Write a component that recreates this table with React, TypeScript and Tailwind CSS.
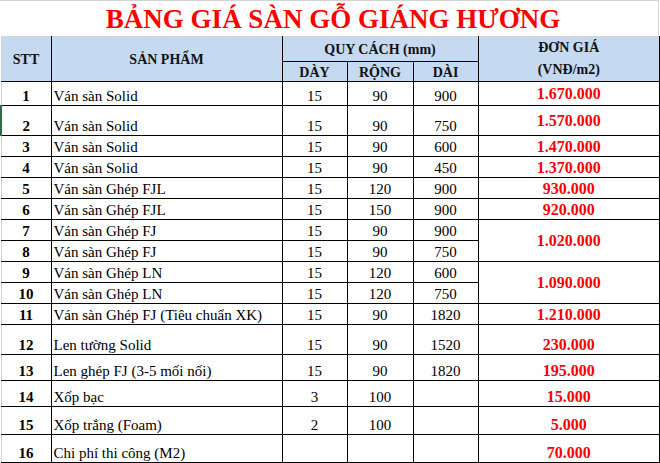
type Row = {
  stt: number;
  name: string;
  day: string;
  rong: string;
  dai: string;
  h: string;
  price?: string;
  span?: number;
  priceAlign?: string;
};

const rows: Row[] = [
  { stt: 1, name: 'Ván sàn Solid', day: '15', rong: '90', dai: '900', h: 'h-[24px]', price: '1.670.000', priceAlign: 'align-middle' },
  { stt: 2, name: 'Ván sàn Solid', day: '15', rong: '90', dai: '750', h: 'h-[30px]', price: '1.570.000', priceAlign: 'align-middle' },
  { stt: 3, name: 'Ván sàn Solid', day: '15', rong: '90', dai: '600', h: 'h-[21px]', price: '1.470.000' },
  { stt: 4, name: 'Ván sàn Solid', day: '15', rong: '90', dai: '450', h: 'h-[21px]', price: '1.370.000' },
  { stt: 5, name: 'Ván sàn Ghép FJL', day: '15', rong: '120', dai: '900', h: 'h-[21px]', price: '930.000' },
  { stt: 6, name: 'Ván sàn Ghép FJL', day: '15', rong: '150', dai: '900', h: 'h-[21px]', price: '920.000' },
  { stt: 7, name: 'Ván sàn Ghép FJ', day: '15', rong: '90', dai: '900', h: 'h-[21px]', price: '1.020.000', span: 2, priceAlign: 'align-middle' },
  { stt: 8, name: 'Ván sàn Ghép FJ', day: '15', rong: '90', dai: '750', h: 'h-[21px]' },
  { stt: 9, name: 'Ván sàn Ghép LN', day: '15', rong: '120', dai: '600', h: 'h-[21px]', price: '1.090.000', span: 2, priceAlign: 'align-middle' },
  { stt: 10, name: 'Ván sàn Ghép LN', day: '15', rong: '120', dai: '750', h: 'h-[21px]' },
  { stt: 11, name: 'Ván sàn Ghép FJ (Tiêu chuẩn XK)', day: '15', rong: '90', dai: '1820', h: 'h-[21px]', price: '1.210.000' },
  { stt: 12, name: 'Len tường Solid', day: '15', rong: '90', dai: '1520', h: 'h-[30px]', price: '230.000' },
  { stt: 13, name: 'Len ghép FJ (3-5 mối nối)', day: '15', rong: '90', dai: '1820', h: 'h-[26px]', price: '195.000' },
  { stt: 14, name: 'Xốp bạc', day: '3', rong: '100', dai: '', h: 'h-[26px]', price: '15.000' },
  { stt: 15, name: 'Xốp trắng (Foam)', day: '2', rong: '100', dai: '', h: 'h-[28px]', price: '5.000' },
  { stt: 16, name: 'Chi phí thi công (M2)', day: '', rong: '', dai: '', h: 'h-[28px]', price: '70.000' },
];

const cell = 'border border-black p-0 leading-[17px]';

export default function App() {
  return (
    <div className="w-[660px] h-[463px] overflow-hidden bg-white font-['Liberation_Serif',serif] text-black">
      <div className="h-[36px] w-[659px] border-t border-r border-[#d4d4d4] flex items-end justify-center pl-[8px] pb-[2px]">
        <h1 className="text-[27px] leading-[30px] font-bold text-[#ff0000]">BẢNG GIÁ SÀN GỖ GIÁNG HƯƠNG</h1>
      </div>
      <table className="table-fixed border-collapse w-[659px] text-[15px]">
        <colgroup>
          <col className="w-[50px]" />
          <col className="w-[231px]" />
          <col className="w-[65px]" />
          <col className="w-[66px]" />
          <col className="w-[65px]" />
          <col className="w-[182px]" />
        </colgroup>
        <thead className="bg-[#c5d9f1] font-bold text-[14px] text-[#111]">
          <tr className="h-[23px]">
            <th rowSpan={2} className={`${cell} border-t-[#d4d4d4] border-l-[#d4d4d4] align-middle`}>STT</th>
            <th rowSpan={2} className={`${cell} border-t-[#d4d4d4] align-middle`}>SẢN PHẨM</th>
            <th colSpan={3} className={`${cell} border-t-[#d4d4d4] align-middle`}>QUY CÁCH (mm)</th>
            <th rowSpan={2} className={`${cell} border-t-[#d4d4d4] border-r-2 align-middle leading-[22px]`}>
              ĐƠN GIÁ
              <br />
              (VNĐ/m2)
            </th>
          </tr>
          <tr className="h-[17px]">
            <th className={`${cell} align-bottom`}>DÀY</th>
            <th className={`${cell} align-bottom`}>RỘNG</th>
            <th className={`${cell} align-bottom`}>DÀI</th>
          </tr>
        </thead>
        <tbody>
          {rows.map((r) => (
            <tr key={r.stt} className={r.h}>
              <td className={`${cell} ${r.stt === 2 ? 'border-l-2 border-l-[#217346]' : 'border-l-[#d4d4d4]'} align-bottom text-center font-bold`}>
                {r.stt}
              </td>
              <td className={`${cell} align-bottom pl-[2px] whitespace-nowrap`}>{r.name}</td>
              <td className={`${cell} align-bottom text-center`}>{r.day}</td>
              <td className={`${cell} align-bottom text-center`}>{r.rong}</td>
              <td className={`${cell} align-bottom text-center`}>{r.dai}</td>
              {r.price !== undefined && (
                <td
                  rowSpan={r.span ?? 1}
                  className={`${cell} border-r-2 ${r.priceAlign ?? 'align-bottom pb-[1px]'} text-center font-bold text-[16px] text-[#ff0000]`}
                >
                  {r.price}
                </td>
              )}
            </tr>
          ))}
        </tbody>
      </table>
    </div>
  );
}
